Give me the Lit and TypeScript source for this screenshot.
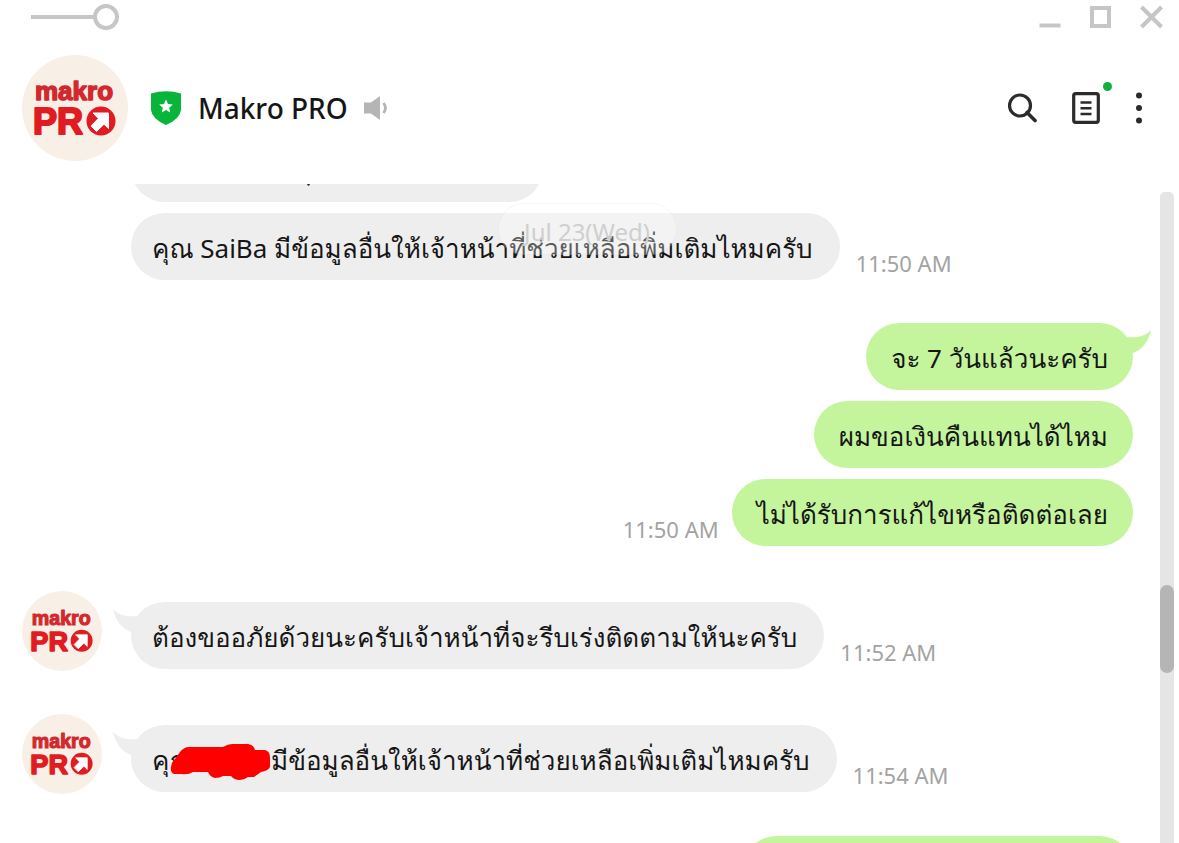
import { LitElement, html, css, nothing } from "lit";
import { customElement, property } from "lit/decorators.js";

interface Message {
  side: "in" | "out";
  text?: string;
  redacted?: string;
  time?: string;
  tail?: boolean;
  avatar?: boolean;
  kind?: string;
}

const HISTORY: Message[] = [
  { side: "in", kind: "first" },
  { side: "in", text: "คุณ SaiBa มีข้อมูลอื่นให้เจ้าหน้าที่ช่วยเหลือเพิ่มเติมไหมครับ", time: "11:50 AM" },
  { side: "out", text: "จะ 7 วันแล้วนะครับ", tail: true },
  { side: "out", text: "ผมขอเงินคืนแทนได้ไหม" },
  { side: "out", text: "ไม่ได้รับการแก้ไขหรือติดต่อเลย", time: "11:50 AM" },
  { side: "in", text: "ต้องขออภัยด้วยนะครับเจ้าหน้าที่จะรีบเร่งติดตามให้นะครับ", time: "11:52 AM", tail: true, avatar: true },
  { side: "in", redacted: "คุณ", text: "มีข้อมูลอื่นให้เจ้าหน้าที่ช่วยเหลือเพิ่มเติมไหมครับ", time: "11:54 AM", tail: true, avatar: true },
  { side: "out", kind: "last" },
];

@customElement("brand-avatar")
export class BrandAvatar extends LitElement {
  static styles = css`
    :host { display: block; flex: none; }
    .logo { display: block; width: 100%; height: auto; }
    .word { font-family: "Liberation Sans", sans-serif; font-weight: 700; stroke-linejoin: round; }
    .small { font-size: 26px; stroke-width: 1.500; fill: #d8262c; stroke: #d02a30; }
    .big { font-size: 36px; stroke-width: 2; fill: #e01b22; stroke: #e01b22; }
  `;
  render() {
    return html`<svg class="logo" viewBox="0 0 106 106" role="img" aria-label="makro PRO">
      <circle cx="53" cy="53" r="53" fill="#f8f0e6"></circle>
      <text class="word small" x="13" y="45">makro</text>
      <text class="word big" x="11" y="79">PR</text>
      <circle cx="79" cy="66" r="14.5" fill="#e01b22"></circle>
      <path d="M71 58h15.500v15.500l-4.500-4.300-7.500 7.300-5.500-5.500 7.300-7.500z" fill="#fff" stroke="#fff" stroke-width="1" stroke-linejoin="round"></path>
    </svg>`;
  }
}

@customElement("chat-message")
export class ChatMessage extends LitElement {
  @property({ attribute: false }) message!: Message;

  static styles = css`
    :host { display: block; }
    .row { display: flex; align-items: flex-end; gap: 16px; }
    .row.out { flex-direction: row-reverse; gap: 13px; }
    .slot { width: 80px; flex: none; align-self: flex-start; margin-right: 13px; }
    .face { width: 80px; margin-top: -11px; margin-bottom: -2px; }
    .bubble {
      position: relative; box-sizing: border-box; height: 67px; border-radius: 34px;
      padding: 0 27px 0 21px; background: #eee; color: #161616;
      font-size: 26px; line-height: 70px; white-space: nowrap;
    }
    .out .bubble { background: #c4f59c; padding: 0 25px; }
    .first { width: 412px; }
    .last { width: 390px; }
    .tail { position: absolute; top: 6px; left: -18px; width: 28px; height: 24px; fill: #eee; }
    .out .tail { left: auto; right: -18px; fill: #c4f59c; transform: scaleX(-1); }
    .mark { position: absolute; left: 176px; top: 48px; width: 3px; height: 3px; fill: #222; }
    .time { color: #a3a3a3; font-size: 22px; line-height: 34px; white-space: nowrap; }
    .name { position: relative; display: inline-block; width: 119px; }
    .scribble { position: absolute; left: 18px; top: 18px; width: 100px; height: 38px; fill: #f00; }
  `;

  render() {
    const m = this.message;
    return html`<div class="row ${m.side}">
      ${m.side === "in"
        ? html`<div class="slot">${m.avatar ? html`<brand-avatar class="face"></brand-avatar>` : nothing}</div>`
        : nothing}
      <div class="bubble ${m.kind ?? ""}">
        ${m.tail
          ? html`<svg class="tail" viewBox="0 0 28 24" aria-hidden="true"><path d="M0 1c6 6 12 8 25 7L28 24H18C9 21 2 12 0 1z"></path></svg>`
          : nothing}${m.kind === "first"
          ? html`<svg class="mark" viewBox="0 0 3 3" aria-hidden="true"><circle cx="1.500" cy="1.500" r="1.200"></circle></svg>`
          : nothing}${m.redacted
          ? html`<span class="name">${m.redacted}<svg class="scribble" viewBox="0 0 100 38" aria-hidden="true">
                <path d="M2 20L10 9Q14 4 19 4H53Q58 1 62 1H78Q84 2 85 7H95Q100 8 100 15V24Q98 28 91 29L84 34H78Q74 37 70 37Q64 37 61 33H53Q50 35 45 35Q40 34 38 29H23Q18 32 12 31H4Q0 29 1 24z"></path></svg></span>`
          : nothing}${m.text ?? ""}
      </div>
      ${m.time ? html`<time class="time">${m.time}</time>` : nothing}
    </div>`;
  }
}

@customElement("app-root")
export class AppRoot extends LitElement {
  static styles = css`
    :host {
      display: flex; flex-direction: column; height: 100vh; overflow: hidden; background: #fff;
      font-family: "Noto Sans", "Open Sans", "Leelawadee UI", "Loma", "Waree", "Noto Sans Thai", sans-serif; color: #161616;
    }
    button { border: 0; padding: 0; background: none; display: block; cursor: pointer; }
    svg { display: block; }
    .titlebar { display: flex; justify-content: space-between; align-items: center; height: 34px; flex: none; padding: 0 15px 0 31px; }
    .opacity { appearance: none; width: 88px; height: 26px; margin: 0; background: linear-gradient(#c6c6c6, #c6c6c6) 0 50% / 66px 4px no-repeat; }
    .opacity::-webkit-slider-thumb { appearance: none; box-sizing: border-box; width: 26px; height: 26px; border: 4px solid #c6c6c6; border-radius: 50%; background: #fff; }
    .window { display: flex; gap: 27px; }
    .header { display: flex; align-items: center; flex: none; height: 106px; padding: 21px 32px 23px 22px; }
    .portrait { width: 106px; }
    .shield { margin-left: 22px; }
    .title { margin: 0 0 0 16px; font-weight: 500; font-size: 28px; line-height: 40px; }
    .speaker { margin-left: 15px; }
    .tools { display: flex; align-items: center; margin-left: auto; }
    .note { position: relative; margin: 0 31px 0 34px; }
    .dot { position: absolute; right: -12px; top: -10px; width: 9px; height: 9px; border-radius: 50%; background: #10b13c; }
    .body { position: relative; display: flex; flex: 1; min-height: 0; }
    .log { flex: 1; min-width: 0; overflow-y: auto; scrollbar-width: none; padding: 0 27px 0 22px; }
    .log::-webkit-scrollbar { display: none; }
    .item { margin-bottom: 11px; }
    .item.turn { margin-top: 43px; }
    .item.group { margin-top: 56px; }
    .item.end { margin-top: 44px; }
    .track { flex: none; width: 14px; margin: 8px 5px 0 0; border-radius: 5px 5px 0 0; background: #e5e5e5; }
    .thumb { width: 14px; height: 88px; margin-top: 393px; border-radius: 7px; background: #b5b5b5; }
    .date {
      position: absolute; left: 0; right: 5px; top: 19px; width: 179px; height: 52px; margin: 0 auto; box-sizing: border-box;
      border: 1px solid rgba(0, 0, 0, 0.03); border-radius: 26px; background: rgba(255, 255, 255, 0.3);
      color: #cfcfcf; font-size: 24px; line-height: 56px; text-align: center;
    }
  `;

  firstUpdated() {
    // Open part-way through the history, with the oldest bubble sliding under the header.
    const log = this.renderRoot.querySelector(".log") as HTMLElement;
    Promise.all(
      Array.from(this.renderRoot.querySelectorAll("chat-message")).map((m) => (m as LitElement).updateComplete)
    ).then(() => { log.scrollTop = 49; });
  }

  private spacing(i: number) {
    if (i === 2) return "turn";
    if (i === 5 || i === 6) return "group";
    return i === 7 ? "end" : "";
  }

  render() {
    return html`
      <div class="titlebar">
        <input class="opacity" type="range" min="0" max="100" value="100" aria-label="Window opacity" />
        <div class="window">
          <button aria-label="Minimize"><svg width="24" height="24" viewBox="0 0 24 24"><path d="M1.500 20.500H22.500" stroke="#c6c6c6" stroke-width="4"></path></svg></button>
          <button aria-label="Maximize"><svg width="24" height="24" viewBox="0 0 24 24"><rect x="3" y="3" width="17" height="18" fill="none" stroke="#c6c6c6" stroke-width="4"></rect></svg></button>
          <button aria-label="Close"><svg width="24" height="24" viewBox="0 0 24 24"><path d="M1.500 2L21.500 22M21.500 2L1.500 22" stroke="#c6c6c6" stroke-width="4"></path></svg></button>
        </div>
      </div>
      <header class="header">
        <brand-avatar class="portrait"></brand-avatar>
        <svg class="shield" width="32" height="36" viewBox="0 0 32 36" role="img" aria-label="Verified">
          <path d="M1 3.500Q16-1 31 3.500V20Q30 29 16 35Q2 29 1 20z" fill="#08b53b"></path>
          <path d="M16 9.500l2 4.500 4.800.5-3.600 3.200 1 4.800-4.200-2.500-4.200 2.500 1-4.800-3.600-3.200 4.800-.5z" fill="#fff"></path>
        </svg>
        <h1 class="title">Makro PRO</h1>
        <svg class="speaker" width="26" height="26" viewBox="0 0 26 26" role="img" aria-label="Sound on">
          <path d="M1 7.500h7L17 1v24l-9-6.500H1z" fill="#b5b5b5"></path>
          <path d="M20.500 8q4 5 0 10" fill="none" stroke="#b5b5b5" stroke-width="2.800"></path>
        </svg>
        <div class="tools">
          <button aria-label="Search"><svg width="30" height="30" viewBox="0 0 30 30" fill="none" stroke="#2b2b2b" stroke-width="3.200"><circle cx="12" cy="12.500" r="10.500"></circle><path d="M19 19.500L27 27.500" stroke-width="3.600" stroke-linecap="round"></path></svg></button>
          <button class="note" aria-label="Notes"><svg width="28" height="32" viewBox="0 0 28 32" fill="none" stroke="#2b2b2b"><rect x="1.700" y="1.700" width="24.600" height="28.600" rx="2" stroke-width="3.200"></rect><path d="M8.500 10.500h11M8.500 16.300h11M8.500 22h11" stroke-width="2.400"></path></svg><span class="dot"></span></button>
          <button aria-label="More"><svg width="16" height="32" viewBox="0 0 16 32" fill="#2b2b2b"><circle cx="8" cy="3.500" r="3"></circle><circle cx="8" cy="16" r="3"></circle><circle cx="8" cy="28.500" r="3"></circle></svg></button>
        </div>
      </header>
      <main class="body">
        <div class="log">
          ${HISTORY.map((m, i) => html`<chat-message class="item ${this.spacing(i)}" .message=${m}></chat-message>`)}
        </div>
        <div class="track"><div class="thumb"></div></div>
        <div class="date">Jul 23(Wed)</div>
      </main>`;
  }
}
